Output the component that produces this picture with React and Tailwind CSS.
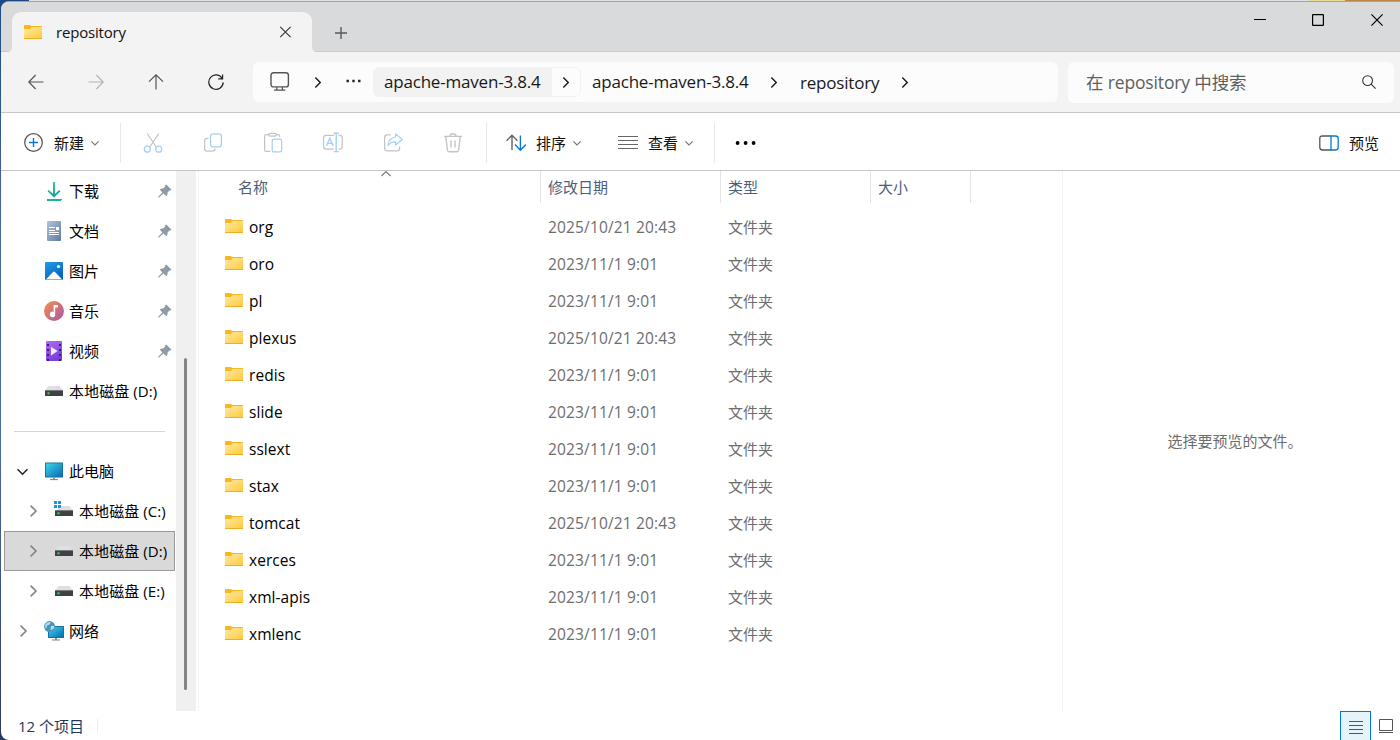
import React from "react";

const sidebarTop = [
  { icon: "download", label: "下载", pin: true },
  { icon: "doc", label: "文档", pin: true },
  { icon: "picture", label: "图片", pin: true },
  { icon: "music", label: "音乐", pin: true },
  { icon: "video", label: "视频", pin: true },
  { icon: "drive", label: "本地磁盘 (D:)", pin: false },
];

const drives = [
  { icon: "driveC", label: "本地磁盘 (C:)" },
  { icon: "drive", label: "本地磁盘 (D:)", selected: true },
  { icon: "drive", label: "本地磁盘 (E:)" },
];

const A = "2025/10/21 20:43";
const B = "2023/11/1 9:01";
const files = [
  ["org", A], ["oro", B], ["pl", B], ["plexus", A], ["redis", B], ["slide", B],
  ["sslext", B], ["stax", B], ["tomcat", A], ["xerces", B], ["xml-apis", B], ["xmlenc", B],
];

function Folder() {
  return (
    <svg width="20" height="16" viewBox="0 0 20 16" className="shrink-0">
      <defs>
        <linearGradient id="fg" x1="0" y1="0" x2="1" y2="1">
          <stop offset="0" stopColor="#ffe9a6" />
          <stop offset="1" stopColor="#ffcb3d" />
        </linearGradient>
      </defs>
      <path d="M1 1.8Q1 1 1.8 1H6.6L8.6 2H18.2Q19 2 19 2.8V8H1Z" fill="#f7b71d" />
      <path d="M1 5H7L9 3H19V14.2H1Z" fill="url(#fg)" />
      <path d="M1 14h18v1H1z" fill="#eeb023" />
    </svg>
  );
}

function Monitor({ x = 1, y = 3, w = 18, h = 14 }) {
  return (
    <g>
      <rect x={x} y={y} width={w} height={h} rx="0.6" fill="#136e98" />
      <rect x={x + 0.9} y={y + 0.9} width={w - 1.8} height={h - 1.8} fill="url(#mon)" />
      <path d={`M${x + w / 2 - 1} ${y + h}h2v2h-2z`} fill="#8a98a2" />
      <path d={`M${x + w / 2 - 4} ${y + h + 1.6}h8v1h-8z`} fill="#75848e" />
    </g>
  );
}

function SideIcon({ name }) {
  let body = null;
  if (name === "download")
    body = (
      <g fill="none" stroke="url(#dl)">
        <path d="M10 1V15M4.2 9.6L10 15.2L15.8 9.6" strokeWidth="1.9" />
        <path d="M3 19H17V19.01" strokeWidth="2" stroke="#1fb592" />
      </g>
    );
  if (name === "doc")
    body = (
      <g>
        <rect x="3" y="0" width="14" height="20" rx="1" fill="url(#doc)" />
        <path d="M5 6.5h6M5 9.5h6M5 11.5h10M5 13.5h10" stroke="#fff" strokeWidth="1.1" />
        <rect x="12" y="6" width="3" height="3.2" fill="#fff" />
      </g>
    );
  if (name === "picture")
    body = (
      <g>
        <rect x="1" y="1" width="18" height="18" rx="1" fill="url(#pic)" />
        <path d="M2 18.4L9 11Q10 10 11 11L18.2 18.4Z" fill="#fff" />
        <circle cx="14.5" cy="5.5" r="1.6" fill="#fff" />
      </g>
    );
  if (name === "music")
    body = (
      <g>
        <circle cx="10" cy="10" r="10" fill="url(#mus)" />
        <path d="M9.6 4H14V6.6H11.2V13.4A2.7 2.7 0 1 1 9.6 11Z" fill="#fff" />
      </g>
    );
  if (name === "video")
    body = (
      <g>
        <rect x="2" y="0" width="16" height="20" rx="1" fill="url(#vid)" />
        <path d="M4 2V20M16 2V20" stroke="#39206e" strokeWidth="2" strokeDasharray="2 3" transform="translate(0 1)" />
        <path d="M7 5.8L13.6 10L7 14.4Z" fill="#f5edff" />
      </g>
    );
  if (name === "drive")
    body = (
      <g>
        <path d="M4.5 5H15.5L19 9.5H1Z" fill="#dedee4" />
        <rect x="1" y="9" width="18" height="6" rx="0.6" fill="#3f4144" />
        <rect x="1" y="9" width="18" height="1" fill="#77797c" />
        <rect x="3.5" y="11.3" width="2" height="2" fill="#35e04a" />
      </g>
    );
  if (name === "driveC")
    body = (
      <g>
        <path d="M6 5H15.5L19 9.5H2Z" fill="#dedee4" />
        <rect x="1" y="9" width="18" height="6" rx="0.6" fill="#3f4144" />
        <rect x="1" y="9" width="18" height="1" fill="#77797c" />
        <rect x="3.5" y="11.3" width="2" height="2" fill="#35e04a" />
        <path d="M0 0h3v3H0zM4 0h3v3H4zM0 4h3v3H0zM4 4h3v3H4z" fill="#1a94e2" />
      </g>
    );
  if (name === "pc") body = <Monitor x={1} y={1.5} w={18} h={15} />;
  if (name === "network")
    body = (
      <g>
        <Monitor x={4} y={5} w={16} h={12} />
        <circle cx="5.6" cy="5.6" r="5.5" fill="#4a93bd" />
        <path d="M1 4Q4 -0.5 7 1.5Q5 4.5 3 4.5Q3 7 1.5 7.5ZM7 5Q10 4 10.5 6Q9 9.5 6.5 9Z" fill="#b5dcec" />
      </g>
    );
  return (
    <svg width="20" height="20" viewBox="0 0 20 20" className="shrink-0 overflow-visible">
      <defs>
        <linearGradient id="dl" x1="0" y1="0" x2="0.3" y2="1"><stop stopColor="#3fc886" /><stop offset="1" stopColor="#0fa3a0" /></linearGradient>
        <linearGradient id="doc" x1="0" y1="0" x2="1" y2="1"><stop stopColor="#b3c5d8" /><stop offset="1" stopColor="#5c7ba1" /></linearGradient>
        <linearGradient id="pic" x1="0" y1="0" x2="0.6" y2="1"><stop stopColor="#1e9de6" /><stop offset="1" stopColor="#0a62bd" /></linearGradient>
        <linearGradient id="mus" x1="0" y1="0" x2="1" y2="1"><stop stopColor="#f59347" /><stop offset="1" stopColor="#a953b1" /></linearGradient>
        <linearGradient id="vid" x1="0" y1="0" x2="0.4" y2="1"><stop stopColor="#b26bf5" /><stop offset="1" stopColor="#7a3fdf" /></linearGradient>
        <linearGradient id="mon" x1="0" y1="0" x2="1" y2="1"><stop stopColor="#3ad7e4" /><stop offset="1" stopColor="#0a69b9" /></linearGradient>
      </defs>
      {body}
    </svg>
  );
}

function Pin() {
  return (
    <svg width="14" height="14" viewBox="0 0 14 14" className="shrink-0">
      <path d="M8.2 0.6L13.4 5.4L12.6 6.6L11.4 6.4L9.6 8.6Q9.7 11 8.4 12.2L5.4 9.4L1 13.6L0.2 13.6V12.8L4.4 8.4L1.6 5.6Q3.2 4.2 5.2 4.4L7.2 2.4L7 1.4Z" fill="#8e9ba6" />
    </svg>
  );
}

function Chevron({ dir = "right", size = 10, color = "#1b1b1b", sw = 1.4 }) {
  const d = { right: "M3 0.5L7.5 5L3 9.5", down: "M0.5 3L5 7.5L9.5 3", up: "M0.5 7L5 2.5L9.5 7" }[dir];
  return (
    <svg width={size} height={size} viewBox="0 0 10 10" className="shrink-0" fill="none" stroke={color} strokeWidth={sw}>
      <path d={d} />
    </svg>
  );
}

function Ico({ children, size = 20 }) {
  return (
    <svg width={size} height={size} viewBox="0 0 20 20" className="shrink-0 overflow-visible" fill="none" strokeWidth="1.25">
      {children}
    </svg>
  );
}

function TitleBar() {
  return (
    <div className="flex h-[50px] bg-[#d9dadc] shadow-[inset_0_-1px_0_#c9cacc]">
      <div className="relative ml-[11px] mt-[10px] flex h-10 w-[300px] items-center rounded-t-[9px] bg-[#f3f3f3]">
        <svg width="5" height="5" viewBox="0 0 5 5" className="absolute bottom-0 -left-[5px]"><path d="M5 0Q5 5 0 5H5Z" fill="#f3f3f3" /></svg>
        <svg width="5" height="5" viewBox="0 0 5 5" className="absolute bottom-0 -right-[5px]"><path d="M0 0Q0 5 5 5H0Z" fill="#f3f3f3" /></svg>
        <div className="ml-[11px] flex"><Folder /></div>
        <span className="ml-[13px] text-[15px] leading-5 tracking-[-0.19px] text-[#111]">repository</span>
        <svg width="12" height="12" viewBox="0 0 12 12" className="ml-auto mr-[21px]"><path d="M1.2 0.8L11.6 11.2M11.6 0.8L1.2 11.2" stroke="#333" strokeWidth="1.1" /></svg>
      </div>
      <svg width="12" height="12" viewBox="0 0 12 12" className="ml-[23px] mt-[25px]"><path d="M6 0V12M0 6H12" stroke="#5a5a5a" strokeWidth="1.4" /></svg>
      <div className="ml-auto flex pr-[17px] pt-[12px]">
        <svg width="12" height="12" viewBox="0 0 12 12"><path d="M0 5.5H12" stroke="#000" strokeWidth="1" /></svg>
        <svg width="12" height="12" viewBox="0 0 12 12" className="ml-[46px]"><rect x="0.6" y="0.6" width="10.8" height="10.8" rx="0.5" fill="none" stroke="#000" strokeWidth="1.2" /></svg>
        <svg width="12" height="12" viewBox="0 0 12 12" className="ml-[47px]"><path d="M0.4 0.4L11.6 11.6M11.6 0.4L0.4 11.6" stroke="#000" strokeWidth="1.2" /></svg>
      </div>
    </div>
  );
}

function NavBar() {
  return (
    <div className="flex h-[61px] items-center border-b border-[#c6c6c6] bg-[#f3f3f3]">
      <div className="flex w-[252px] shrink-0 items-center gap-11 pl-[26.5px]">
        <svg width="16" height="16" viewBox="0 0 16 16" fill="none" stroke="#555" strokeWidth="1.2"><path d="M15.5 8H1M7.6 1L0.8 8L7.6 15" /></svg>
        <svg width="16" height="16" viewBox="0 0 16 16" fill="none" stroke="#b4b4b4" strokeWidth="1.2"><path d="M0.5 8H15M8.4 1L15.2 8L8.4 15" /></svg>
        <svg width="16" height="16" viewBox="0 0 16 16" fill="none" stroke="#555" strokeWidth="1.2"><path d="M8 15.5V1M1 7.6L8 0.8L15 7.6" /></svg>
        <svg width="16" height="16" viewBox="0 0 16 16" fill="none" stroke="#222" strokeWidth="1.2"><path d="M14.3 4.6A7.2 7.2 0 1 0 15.2 8.4M14.6 0.5V4.9H10.2" /></svg>
      </div>
      <div className="flex h-10 w-[805px] items-center rounded-md bg-[#fcfcfc] text-[17px] tracking-[-0.2px] whitespace-nowrap text-[#191919]">
        <div className="ml-[17px]">
          <Ico>
            <rect x="1" y="0.7" width="17.4" height="14.2" rx="2.5" stroke="#555" strokeWidth="1.4" />
            <path d="M6.8 15V18M12.4 15V18M4 18.2H15.4" stroke="#555" strokeWidth="1.3" />
          </Ico>
        </div>
        <div className="ml-[22px] flex"><Chevron sw={1.3} size={11} /></div>
        <svg width="15" height="4" viewBox="0 0 15 4" className="-mt-[2px] ml-[23px]"><path d="M0.5 0.8h2.4v2.4H0.5zM6.3 0.8h2.4v2.4H6.3zM12.1 0.8h2.4v2.4h-2.4z" fill="#222" /></svg>
        <div className="ml-3 flex h-[30px] w-[208px] items-center overflow-hidden rounded-md border border-[#f1f1f1]">
          <div className="flex h-full w-[178px] items-center bg-[#f2f2f2] pl-[10px]">apache-maven-3.8.4</div>
          <div className="ml-[8px] flex"><Chevron sw={1.3} size={11} /></div>
        </div>
        <span className="ml-[11px] w-[157px]">apache-maven-3.8.4</span>
        <div className="ml-[19px] flex"><Chevron sw={1.3} size={11} /></div>
        <span className="ml-[21px] w-[79px] pt-[2px]">repository</span>
        <div className="ml-[20px] flex"><Chevron sw={1.3} size={11} /></div>
      </div>
      <div className="ml-[10px] flex h-[41px] w-[326px] items-center rounded-md bg-[#fcfcfc] pr-[18px] pl-[18px]">
        <span className="text-[17.5px] tracking-[-0.15px] whitespace-nowrap text-[#5f5f5f]">在 repository 中搜索</span>
        <svg width="14" height="14" viewBox="0 0 14 14" className="ml-auto" fill="none" stroke="#333" strokeWidth="1.1"><circle cx="5.6" cy="5.6" r="4.9" /><path d="M9.2 9.2L13.6 13.6" /></svg>
      </div>
    </div>
  );
}

function Divider() {
  return <div className="h-10 w-px shrink-0 bg-[#e8e8e8]" />;
}

function ToolBar() {
  const g = "#c4c4c4";
  const b = "#a5d0f3";
  return (
    <div className="flex h-[58px] items-center border-b border-[#c6c6c6] bg-white pt-[3px] text-[15px] text-[#111]">
      <div className="flex w-[119px] shrink-0 items-center pl-[23px]">
        <Ico>
          <circle cx="9.5" cy="9.5" r="8.8" stroke="#555" />
          <path d="M9.5 5V14M5 9.5H14" stroke="#0a78d4" strokeWidth="1.4" />
        </Ico>
        <span className="ml-[10px]">新建</span>
        <div className="ml-[7px] flex"><Chevron dir="down" size={8} color="#777" /></div>
      </div>
      <Divider />
      <div className="flex w-[365px] shrink-0 items-center gap-10 pl-[22px]">
        <Ico>
          <path d="M4.2 0.5L13.2 14M15.8 0.5L6.8 14" stroke={g} />
          <circle cx="4.3" cy="16.2" r="3" stroke={b} /><circle cx="15.7" cy="16.2" r="3" stroke={b} />
        </Ico>
        <Ico>
          <path d="M5.6 5.4H4Q1.6 5.4 1.6 8V15.4Q1.6 18 4.2 18H9.4Q11.8 18 12.2 15.6" stroke={g} />
          <rect x="7.6" y="0.9" width="10.8" height="13" rx="2.4" stroke={b} />
        </Ico>
        <Ico>
          <path d="M7.4 18.4H3.4Q1.6 18.4 1.6 16.6V3.2Q1.6 1.6 3.4 1.6H6M13.4 1.6H15Q16.6 1.6 16.6 3.2V4" stroke={g} />
          <rect x="5.8" y="0.4" width="7.6" height="2.8" rx="1.4" stroke={g} />
          <rect x="9.2" y="6.2" width="9.4" height="12.6" rx="1.6" stroke={b} />
        </Ico>
        <Ico>
          <path d="M11 2.4H3.2Q0.6 2.4 0.6 5V13.6Q0.6 16.2 3.2 16.2H11M15.4 2.4H16.8Q19.2 2.4 19.2 5V13.6Q19.2 16.2 16.8 16.2H15.4" stroke={g} />
          <path d="M3.4 13L6.8 5.2L10.2 13M4.6 10.4H9M13.2 0.2V18.6M10.6 0.2H15.8M10.6 18.6H15.8" stroke={b} strokeWidth="1.4" />
        </Ico>
        <Ico>
          <path d="M8 1.8H4.4Q1.6 1.8 1.6 4.4V15Q1.6 17.8 4.4 17.8H14Q16.6 17.8 16.6 15V13.6" stroke={g} />
          <path d="M12.6 0.9L19.2 6.4L12.6 12V8.8Q8 8.6 5 12.4Q5.6 4.8 12.6 4Z" stroke={b} strokeLinejoin="round" />
        </Ico>
        <Ico>
          <path d="M1 3.4H19M7 3.2Q7 0.8 10 0.8Q13 0.8 13 3.2M2.8 3.6L4.4 17Q4.6 18.8 6.2 18.8H13.8Q15.4 18.8 15.6 17L17.2 3.6M8 7.4V14.4M12 7.4V14.4" stroke={g} strokeWidth="1.4" />
        </Ico>
      </div>
      <Divider />
      <div className="flex w-[227px] shrink-0 items-center pl-[19px]">
        <svg width="20" height="18" viewBox="0 0 20 18" fill="none" strokeWidth="1.4">
          <path d="M6 16V1.4M0.6 6.8L6 1.2L11.4 6.8" stroke="#666" />
          <path d="M14.4 1.5V16M9 10.6L14.4 16.2L19.8 10.6" stroke="#0a78d4" />
        </svg>
        <span className="ml-[10px]">排序</span>
        <div className="ml-[7px] flex"><Chevron dir="down" size={8} color="#777" /></div>
        <svg width="20" height="14" viewBox="0 0 20 14" className="ml-[37px]"><path d="M0 .5h20M0 4.5h20M0 8.5h20M0 12.5h20" stroke="#666" strokeWidth="1.1" /></svg>
        <span className="ml-[10px]">查看</span>
        <div className="ml-[7px] flex"><Chevron dir="down" size={8} color="#777" /></div>
      </div>
      <Divider />
      <svg width="22" height="4" viewBox="0 0 22 4" className="ml-5"><circle cx="2.6" cy="2" r="1.9" /><circle cx="10.6" cy="2" r="1.9" /><circle cx="18.6" cy="2" r="1.9" /></svg>
      <div className="ml-auto flex items-center pr-[21px]">
        <svg width="20" height="16" viewBox="0 0 20 16" fill="none" strokeWidth="1.3">
          <path d="M12 1H3.5Q0.8 1 0.8 3.6V12.2Q0.8 15 3.5 15H12" stroke="#555" />
          <path d="M12 1H16.5Q19.2 1 19.2 3.6V12.2Q19.2 15 16.5 15H12Z" stroke="#0a78d4" />
        </svg>
        <span className="ml-[10px]">预览</span>
      </div>
    </div>
  );
}

function Sidebar() {
  return (
    <div className="flex w-[175px] shrink-0 flex-col text-[15px] text-black">
      {sidebarTop.map((s) => (
        <div key={s.label} className="flex h-10 items-center pr-1 pl-[43px]">
          <SideIcon name={s.icon} />
          <span className="ml-[5px] tracking-[0.08px] whitespace-nowrap">{s.label}</span>
          {s.pin && <div className="ml-auto flex"><Pin /></div>}
        </div>
      ))}
      <div className="flex h-10 items-center pr-[11px] pl-[13px]"><div className="h-px flex-1 bg-[#d6d6d6]" /></div>
      <div className="flex h-10 items-center pl-4">
        <Chevron dir="down" size={11} color="#222" />
        <div className="ml-4 flex"><SideIcon name="pc" /></div>
        <span className="ml-[5px]">此电脑</span>
      </div>
      {drives.map((d) => (
        <div key={d.label} className={d.selected ? "ml-[3px] mr-px flex h-10 items-center border border-[#999] bg-[#d9d9d9] pl-[22px]" : "flex h-10 items-center pl-[26px]"}>
          <Chevron size={12} color="#868686" />
          <div className="ml-[15px] flex"><SideIcon name={d.icon} /></div>
          <span className="ml-[5px] tracking-[0.08px] whitespace-nowrap">{d.label}</span>
        </div>
      ))}
      <div className="flex h-10 items-center pl-4">
        <Chevron size={12} color="#868686" />
        <div className="ml-[15px] flex"><SideIcon name="network" /></div>
        <span className="ml-[5px]">网络</span>
      </div>
    </div>
  );
}

function FileList() {
  return (
    <div className="relative ml-[2px] w-[864px] shrink-0 border-l border-[#f5f5f5] text-[15px]">
      <div className="absolute top-[-2px] left-[182px] flex"><Chevron dir="up" size={10} color="#777" sw={1.1} /></div>
      <div className="flex h-8 items-center text-[#4c607a]">
        <div className="flex h-full w-[342px] items-center border-r border-[#e3e3e3] pl-[39px]">名称</div>
        <div className="flex h-full w-[180px] items-center border-r border-[#e3e3e3] pl-[7px]">修改日期</div>
        <div className="flex h-full w-[150px] items-center border-r border-[#e3e3e3] pl-[7px]">类型</div>
        <div className="flex h-full w-[100px] items-center border-r border-[#e3e3e3] pl-[7px]">大小</div>
      </div>
      <div className="pt-[6px]">
        {files.map(([name, date]) => (
          <div key={name} className="flex h-[37px] items-center text-[#6d6d6d]">
            <div className="flex w-[349px] items-center pl-[25px]">
              <div className="-mt-[3px] flex"><Folder /></div>
              <span className="ml-[5px] text-[15.5px] tracking-[0.05px] text-black">{name}</span>
            </div>
            <div className="w-[180px] text-[15.5px] tracking-[0.16px] whitespace-nowrap">{date}</div>
            <div>文件夹</div>
          </div>
        ))}
      </div>
    </div>
  );
}

export default function App() {
  return (
    <div className="flex h-[740px] w-[1400px] flex-col overflow-hidden bg-[linear-gradient(#1c4a86_0%,#47679a_30%,#4f6a94_60%,#2a3a64_100%)] font-['Open_Sans','Noto_Sans_CJK_SC',sans-serif]">
      <div className="flex h-px shrink-0">
        <div className="w-[29px] bg-[#1d4780]" />
        <div className="flex-1 bg-[#dfe1e2]" />
        <div className="w-9 bg-[#e6dc9a]" />
        <div className="w-[55px] bg-[#b98548]" />
      </div>
      <div className="ml-px flex h-[739px] flex-col overflow-hidden rounded-l-[8px] border-t border-[#a2a3a5] bg-white">
        <TitleBar />
        <NavBar />
        <ToolBar />
        <div className="flex h-[540px] shrink-0">
          <Sidebar />
          <div className="w-5 shrink-0 bg-[#f0f0f0] pt-[187px] pl-2">
            <div className="h-[332px] w-[3px] rounded-full bg-[#858585]" />
          </div>
          <FileList />
          <div className="flex flex-1 items-center justify-center border-l border-[#f3f3f3] pl-[7px] text-[15px] text-[#6d6d6d]">选择要预览的文件。</div>
        </div>
        <div className="flex h-[29px] shrink-0 items-center text-[15px] text-[#1e395b]">
          <span className="ml-[17px] w-[79px] pt-[2px]">12 个项目</span>
          <div className="h-[14px] w-px bg-[#ededed]" />
          <div className="ml-auto flex h-full w-[31px] justify-center border border-b-0 border-[#0078d7] bg-[#e5f3fb] pt-[9px]">
            <svg width="14" height="13" viewBox="0 0 14 13"><path d="M0 .5h14M0 4.5h14M0 8.5h14M0 12.5h14" stroke="#555" /></svg>
          </div>
          <svg width="14" height="14" viewBox="0 0 14 14" className="ml-2 mr-[7px]" fill="none" stroke="#555"><path d="M.5 .5h13v11H.5zM0 13.5h14" /></svg>
        </div>
      </div>
    </div>
  );
}
